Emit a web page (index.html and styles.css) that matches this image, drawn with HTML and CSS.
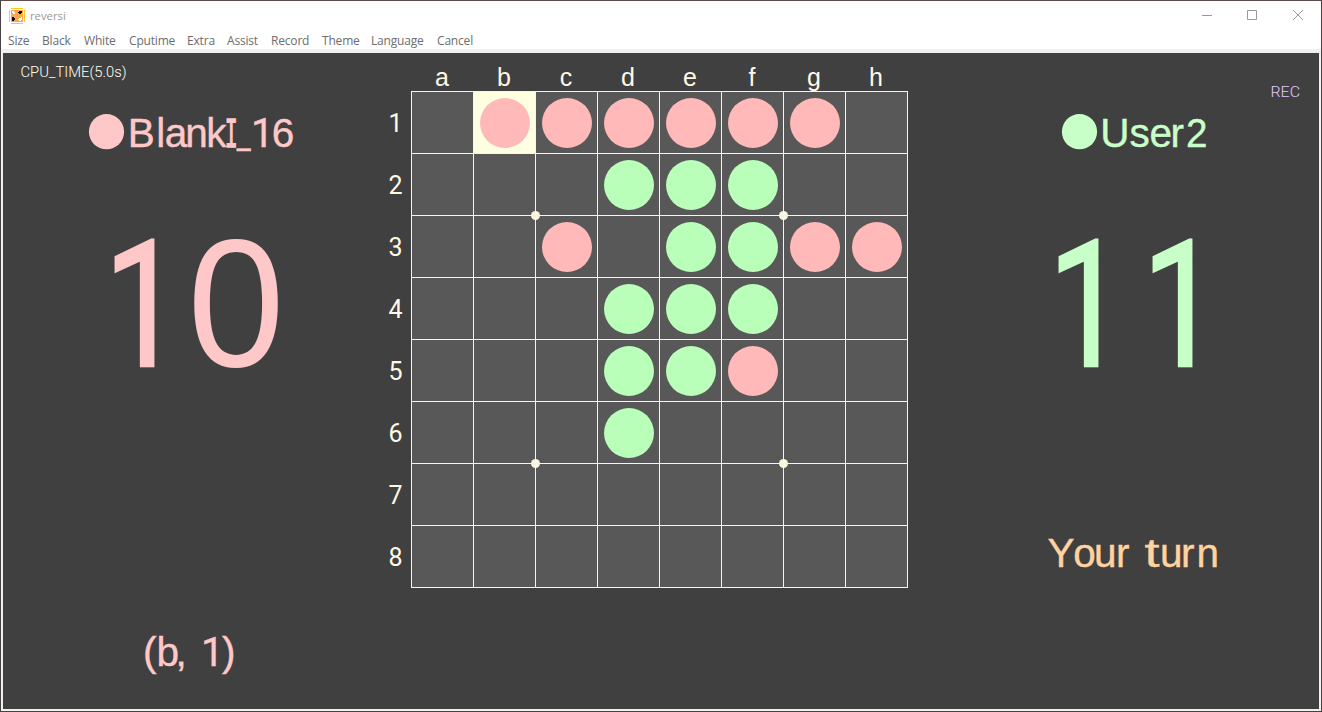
FILE: index.html
```
<!DOCTYPE html>
<html lang="en">
<head>
<meta charset="utf-8">
<title>reversi</title>
<link rel="stylesheet" href="styles.css">
</head>
<body>
<div class="window">
  <header class="titlebar">
    <svg class="app-icon" width="16" height="16" viewBox="0 0 16 16" shape-rendering="crispEdges">
      <path fill="#ffc820" d="M2 0h12v1H2zM2 15h12v1H2zM0 2h1v12H0zM15 2h1v12h-1z"/>
      <path fill="#ffa54a" d="M2 2h12v12H2z"/>
      <path fill="#fff" d="M3 3h2v1h1v2H4V5H3zM10 10h2v-1h1v3h-1v1h-2v-1H9v-1h1z"/>
      <path fill="#000" d="M10 3h3v2h-1v1h-2V5H9V4h1zM3 9h2v1h1v2H5v1H3z"/>
    </svg>
    <span class="title">reversi</span>
    <svg class="controls" width="103" height="12" viewBox="0 0 103 12" fill="none" stroke="#999">
      <path d="M0 6.500h10M45.500 1.500h9v9h-9zM91 1l10 10M101 1L91 11"/>
    </svg>
  </header>
  <nav class="menu">
    <span>Size</span><span>Black</span><span>White</span><span>Cputime</span><span>Extra</span><span>Assist</span><span>Record</span><span>Theme</span><span>Language</span><span>Cancel</span>
  </nav>
  <main class="game">
    <section class="panel pink">
      <svg class="status" width="377" height="30" viewBox="3 53 377 30"><text class="small cream" x="20.500" y="76.500" textLength="106" lengthAdjust="spacingAndGlyphs">CPU_TIME(5.0s)</text></svg>
      <svg class="name" width="377" height="60" viewBox="3 103 377 60">
        <circle cx="106.500" cy="131.700" r="17.600"/>
        <text class="label" y="146.600" x="127.800 156.300 164.700 185.300 206.300">Blank<tspan class="serif-i" x="224.800" textLength="13" lengthAdjust="spacingAndGlyphs">I</tspan><tspan x="237" y="142.800" textLength="13.500" lengthAdjust="spacingAndGlyphs">_</tspan><tspan class="digit" x="251" y="146.600">1</tspan><tspan x="271.800" y="146.600">6</tspan></text>
      </svg>
      <svg class="score" width="377" height="210" viewBox="3 198 377 210"><text class="points" y="366" x="104"><tspan class="one" textLength="78" lengthAdjust="spacingAndGlyphs">1</tspan><tspan x="187.500" textLength="97" lengthAdjust="spacingAndGlyphs">0</tspan></text></svg>
      <svg class="message" width="377" height="60" viewBox="3 623 377 60"><text class="label" y="666" x="143 156.500 175.500">(b,<tspan class="digit" x="201">1</tspan><tspan x="222">)</tspan></text></svg>
    </section>
    <section class="board-area">
      <div class="columns"><span>a</span><span>b</span><span>c</span><span>d</span><span>e</span><span>f</span><span>g</span><span>h</span></div>
      <div class="rows"><span>1</span><span>2</span><span>3</span><span>4</span><span>5</span><span>6</span><span>7</span><span>8</span></div>
      <div class="board">
        <i></i><i class="last p"></i><i class="p"></i><i class="p"></i><i class="p"></i><i class="p"></i><i class="p"></i><i></i>
        <i></i><i></i><i></i><i class="g"></i><i class="g"></i><i class="g"></i><i></i><i></i>
        <i></i><i></i><i class="p star"></i><i></i><i class="g"></i><i class="g"></i><i class="p star"></i><i class="p"></i>
        <i></i><i></i><i></i><i class="g"></i><i class="g"></i><i class="g"></i><i></i><i></i>
        <i></i><i></i><i></i><i class="g"></i><i class="g"></i><i class="p"></i><i></i><i></i>
        <i></i><i></i><i></i><i class="g"></i><i></i><i></i><i></i><i></i>
        <i></i><i></i><i class="star"></i><i></i><i></i><i></i><i class="star"></i><i></i>
        <i></i><i></i><i></i><i></i><i></i><i></i><i></i><i></i>
      </div>
    </section>
    <section class="panel green">
      <svg class="status" width="411" height="50" viewBox="908 53 411 50"><text class="small violet" x="1270.500" y="97" textLength="29.500" lengthAdjust="spacingAndGlyphs">REC</text></svg>
      <svg class="name user" width="411" height="60" viewBox="908 103 411 60">
        <circle cx="1079.500" cy="131.700" r="17.600"/>
        <text class="label" y="146.600" x="1100.300 1129.500 1149.500 1170.500">User<tspan x="1186" textLength="21.500" lengthAdjust="spacingAndGlyphs">2</tspan></text>
      </svg>
      <svg class="score" width="411" height="210" viewBox="908 198 411 210"><text class="points one" y="366" x="1048"><tspan textLength="78" lengthAdjust="spacingAndGlyphs">1</tspan><tspan x="1142" textLength="78" lengthAdjust="spacingAndGlyphs">1</tspan></text></svg>
      <svg class="turn" width="411" height="60" viewBox="908 523 411 60"><text class="label orange" y="567" x="1047.500 1073.300 1094 1116 1130">Your <tspan x="1144.500" textLength="15" lengthAdjust="spacingAndGlyphs">t</tspan><tspan x="1160 1181 1196.500">urn</tspan></text></svg>
    </section>
  </main>
</div>
</body>
</html>
```
FILE: styles.css
```
* { box-sizing: border-box; }
body { margin: 0; overflow: hidden; background: #fff; }
svg { display: block; flex: none; }
.window {
  width: 1322px; height: 712px;
  border: 1px solid #4a4242; border-top-color: #5b4b4b;
  background: #fff;
  font: 12px "Open Sans", "Noto Sans", sans-serif;
}
.titlebar { display: flex; align-items: center; height: 29px; padding: 0 16px 0 8px; }
.title { margin-left: 5px; color: #999; font-size: 11.300px; }
.controls { margin-left: auto; margin-top: -1px; }
.menu {
  display: grid;
  grid-template-columns: 34px 42px 45px 58px 40px 44px 51px 49px 66px 60px;
  height: 19px; padding-left: 7px;
  color: #6d6d6d; line-height: 22px; letter-spacing: -0.180px; white-space: nowrap;
}
.game {
  display: grid; grid-template-columns: 377px 528px 411px;
  width: 1320px; height: 662px;
  border: 2px solid #f0f0f0; border-top-width: 4px;
  background: #404040;
}
.panel { display: flex; flex-direction: column; }
.pink { fill: #ffc8c8; stroke: #ffc8c8; stroke-width: 0; }
.green { fill: #c8ffc8; stroke: #c8ffc8; stroke-width: 0; }
.orange { fill: #ffd2a0; stroke: #ffd2a0; }
.cream { fill: #fffff0; }
.violet { fill: #e6c8ff; }
.name { margin-top: 20px; }
.name.user { margin-top: 0; }
.score { margin-top: 35px; }
.message { margin-top: 215px; }
.turn { margin-top: 115px; }
.label { font: 40.500px "Liberation Sans", sans-serif; stroke-width: 0.400px; }
.digit { font-family: Roboto, sans-serif; }
.serif-i { font-family: "Liberation Mono", monospace; font-size: 43px; stroke-width: 1.300px; }
.points { font: 181px "Liberation Sans", sans-serif; }
.one { font-family: Roboto, sans-serif; font-size: 177px; stroke-width: 2.500px; }
.small { font: 300 15.500px Roboto, sans-serif; }
.board-area {
  display: grid; grid-template: 38px 497px / 31px 497px;
  color: #fff8e6; font: 25px "Liberation Sans", sans-serif;
}
.columns { grid-column: 2; display: grid; grid-template-columns: repeat(8, 62px); text-align: center; line-height: 48px; }
.rows { display: grid; grid-template-rows: repeat(8, 62px); text-align: center; line-height: 66px; font-family: Roboto, sans-serif; }
.board {
  display: grid; grid-template: repeat(8, 62px) / repeat(8, 62px);
  border: solid #faf5e1; border-width: 0 1px 1px 0;
}
.board i { position: relative; padding: 6px; border: solid #faf5e1; border-width: 1px 0 0 1px; background: #585858; }
.board .last { background: #ffffe1; }
.p::before, .g::before { content: ""; display: block; width: 50px; height: 50px; border-radius: 50%; background: #ffb9b9; }
.g::before { background: #b9ffb9; }
/* Guide dots sit over the crossing at a cell's corner. */
.star::after { content: ""; position: absolute; z-index: 1; left: -5px; top: -5px; width: 9px; height: 9px; border-radius: 50%; background: #faf5e1; }
```
